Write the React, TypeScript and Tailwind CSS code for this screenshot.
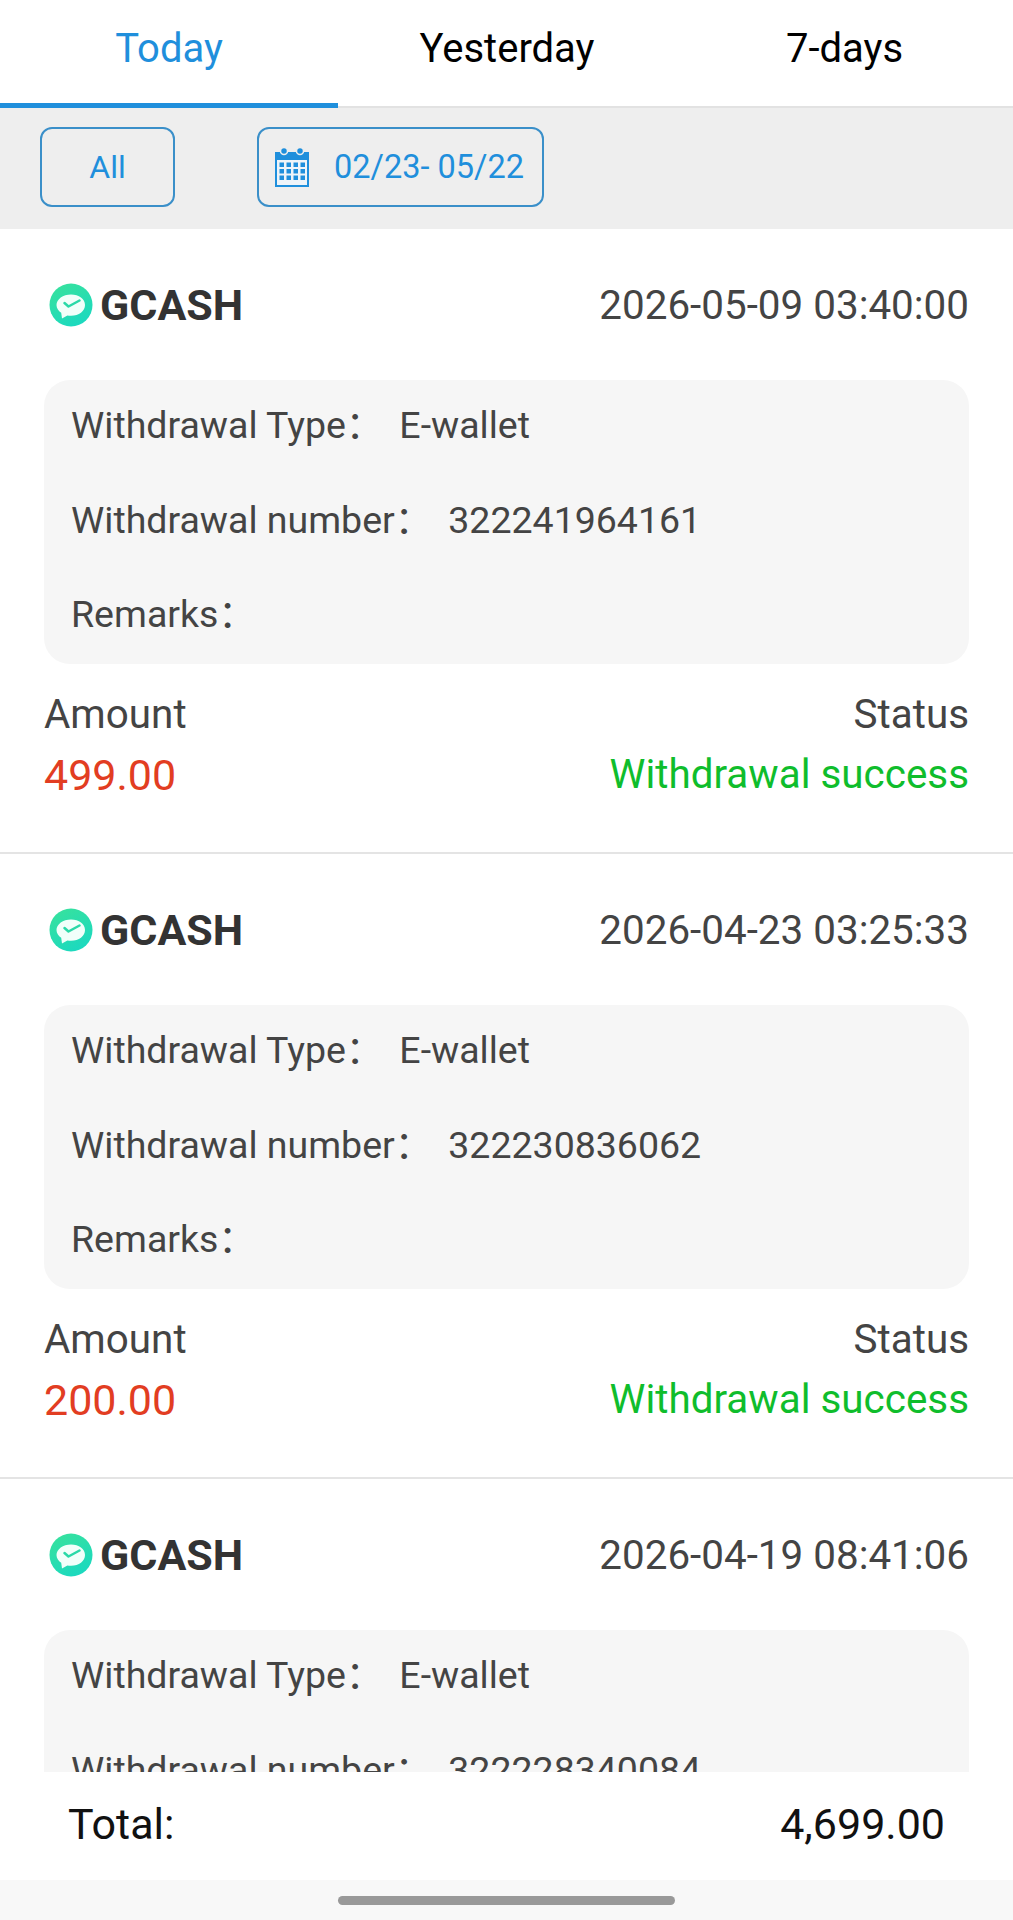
import React from "react";

const records = [
  { time: "2026-05-09 03:40:00", number: "322241964161", amount: "499.00" },
  { time: "2026-04-23 03:25:33", number: "322230836062", amount: "200.00" },
  { time: "2026-04-19 08:41:06", number: "322228340084", amount: "4,000.00" },
];

function GcashLogo() {
  return (
    <svg width="44" height="44" viewBox="0 0 44 44" className="shrink-0">
      <defs>
        <linearGradient id="gcashFill" x1="0.1" y1="0" x2="0.6" y2="1">
          <stop offset="0" stopColor="#38e29c" />
          <stop offset="1" stopColor="#1cd9bf" />
        </linearGradient>
      </defs>
      <circle cx="22" cy="22" r="21.5" fill="url(#gcashFill)" />
      <path d="M22 11.5c-8 0-14.500 4.700-14.500 10.500 0 3.100 1.800 5.800 4.700 7.700L13 35.500l5.400-3c1.100.2 2.400.3 3.600.3 8 0 14-4.800 14-10.800S30 11.500 22 11.500z" fill="#f1fffa" />
      <path d="M15.500 20l4 3.500 11-6" fill="none" stroke="#2bd9a8" strokeWidth="2.5" strokeLinecap="round" strokeLinejoin="round" />
    </svg>
  );
}

function CalendarIcon() {
  return (
    <svg width="36" height="42" viewBox="0 0 36 42" className="shrink-0">
      <path d="M1 6h34v35H1z" fill="#1f8fdc" />
      <rect x="3" y="14" width="30" height="25" fill="#eef4f9" />
      <circle cx="10" cy="5" r="3.5" fill="#1f8fdc" stroke="#eeeeee" strokeWidth="1.5" />
      <circle cx="26" cy="5" r="3.5" fill="#1f8fdc" stroke="#eeeeee" strokeWidth="1.5" />
      {[16.5, 23, 29.5].map((y) =>
        [5.5, 12.5, 19.5, 26.5].map((x) => (
          <rect key={`${x}-${y}`} x={x} y={y} width="4.5" height="4.5" fill="#1f8fdc" />
        ))
      )}
    </svg>
  );
}

function InfoRow({ label, value }: { label: string; value?: string }) {
  return (
    <div className="flex h-[47px] items-center">
      <span>{label}：</span>
      {value && <span className="ml-[16px]">{value}</span>}
    </div>
  );
}

function RecordCard({ time, number, amount }: { time: string; number: string; amount: string }) {
  return (
    <div className="h-[625px] shrink-0 border-b-2 border-[#e4e4e4] px-[44px] pt-[51px]">
      <div className="flex h-[50px] items-center justify-between">
        <div className="ml-[5px] flex items-center gap-[7px]">
          <GcashLogo />
          <span className="text-[43px] font-bold text-[#333333]">GCASH</span>
        </div>
        <span className="pt-[3px] text-[40.4px] text-[#444444]">{time}</span>
      </div>
      <div className="mt-[50px] flex h-[284px] flex-col justify-between rounded-[26px] bg-[#f6f6f6] px-[27px] pb-[26px] pt-[22px] text-[37.5px] text-[#444444]">
        <InfoRow label="Withdrawal Type" value="E-wallet" />
        <InfoRow label="Withdrawal number" value={number} />
        <InfoRow label="Remarks" />
      </div>
      <div className="mt-[21px] flex items-start justify-between text-[40.4px] leading-[60px]">
        <div>
          <div className="text-[#444444]">Amount</div>
          <div className="text-[43px] text-[#e23d22]">{amount}</div>
        </div>
        <div className="text-right">
          <div className="text-[#444444]">Status</div>
          <div className="text-[#0fbd2c]">Withdrawal success</div>
        </div>
      </div>
    </div>
  );
}

export default function App() {
  return (
    <div className="flex h-[1920px] w-[1013px] flex-col overflow-hidden bg-white font-['Roboto','Noto_Sans_CJK_SC',sans-serif]">
      {/* Tabs */}
      <div className="flex h-[108px] shrink-0 border-b-2 border-[#e2e2e2] text-[40px] text-black">
        <div className="relative flex w-[338px] items-center justify-center pb-[8px] text-[#1f8fdc]">
          Today
          <div className="absolute bottom-[-2px] left-0 h-[5px] w-full bg-[#1f8fdc]" />
        </div>
        <div className="flex w-[338px] items-center justify-center pb-[8px]">Yesterday</div>
        <div className="flex w-[337px] items-center justify-center pb-[8px]">7-days</div>
      </div>

      {/* Filters */}
      <div className="flex h-[121px] shrink-0 items-center bg-[#eeeeee] pb-[3px] pl-[40px]">
        <div className="flex h-[80px] w-[135px] items-center justify-center rounded-[12px] border-2 border-[#3a8fc9] text-[32px] text-[#1f8fdc]">
          All
        </div>
        <div className="ml-[82px] flex h-[80px] w-[287px] items-center gap-[24px] rounded-[12px] border-2 border-[#3a8fc9] pl-[15px] text-[32.5px] text-[#1f8fdc]">
          <CalendarIcon />
          <span>02/23- 05/22</span>
        </div>
      </div>

      {/* Records */}
      <div className="min-h-0 flex-1 overflow-hidden">
        {records.map((r) => (
          <RecordCard key={r.time} time={r.time} number={r.number} amount={r.amount} />
        ))}
      </div>

      {/* Total */}
      <div className="flex h-[108px] shrink-0 items-center justify-between px-[68px] pb-[4px] text-[43px] text-[#111111]">
        <span>Total:</span>
        <span>4,699.00</span>
      </div>

      {/* Nav bar */}
      <div className="flex h-[40px] shrink-0 items-center justify-center bg-[#f8f8f8]">
        <div className="h-[9px] w-[337px] rounded-full bg-[#999999]" />
      </div>
    </div>
  );
}
